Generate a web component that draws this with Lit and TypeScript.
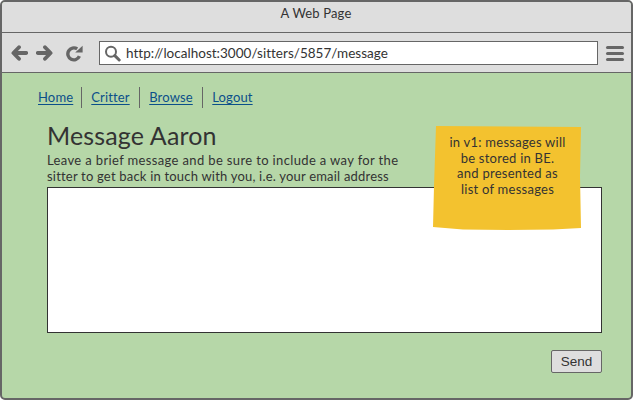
import { LitElement, html, css } from "lit";
import { customElement } from "lit/decorators.js";

@customElement("app-root")
export class AppRoot extends LitElement {
  static styles = css`
    :host { display: block; width: 633px; height: 400px; font-family: "Lato", "Open Sans", sans-serif; color: #333; }
    * { box-sizing: border-box; }
    .frame { position: relative; width: 633px; height: 400px; border: 2px solid #666; border-radius: 5px; background: #b6d7a8; display: flex; flex-direction: column; overflow: hidden; }
    .title { height: 31px; flex: none; background: #dedede; border-bottom: 1px solid #666; text-align: center; font-size: 13px; line-height: 23px; color: #333; padding-right: 1px; letter-spacing: 0.15px; }
    .toolbar { height: 40px; flex: none; background: #dedede; border-bottom: 1px solid #666; display: flex; align-items: center; padding: 1px 7px 0 9px; }
    .nav-icon { display: block; flex: none; }
    .back { margin-right: 8px; }
    .forward { margin-right: 13px; }
    .reload { margin-right: 16px; }
    .address { width: 499px; height: 24px; flex: none; background: #fff; border: 1.5px solid #666; display: flex; align-items: center; padding-left: 4px; gap: 5px; font-size: 13.5px; letter-spacing: 0.02px; color: #333; }
    .burger { margin-left: 8px; display: flex; flex-direction: column; gap: 3px; }
    .burger i { display: block; width: 18px; height: 3px; border-radius: 2px; background: #666; }
    .content { flex: 1; padding: 14px 29px 0 36px; display: flex; flex-direction: column; }
    .links { display: flex; height: 21px; align-items: stretch; font-size: 13px; letter-spacing: 0.15px; }
    .links a { color: #0b4f8a; text-decoration: underline; text-underline-offset: 2px; line-height: 20px; padding: 0 9.5px 0 9px; border-left: 1px solid #666; }
    .links a:first-child { padding-left: 0; padding-right: 8px; border-left: none; }
    .body { margin: 12px 0 0 9px; display: flex; flex-direction: column; }
    h1 { margin: 0; font-size: 25px; font-weight: 400; line-height: 30px; letter-spacing: 0.15px; color: #333; }
    p { margin: 0; font-size: 13px; line-height: 16px; padding-top: 2px; white-space: nowrap; }
    .line-a { display: block; letter-spacing: 0.36px; }
    .line-b { display: block; letter-spacing: 0.2px; }
    .box { margin-top: 3px; height: 146px; background: #fff; border: 1px solid #333; }
    .actions { display: flex; justify-content: flex-end; margin-top: 17px; }
    button { width: 51px; height: 23px; padding: 0; background: #dedede; border: 1px solid #666; border-radius: 2px; font-family: "Liberation Sans", Arial, sans-serif; font-size: 13.5px; color: #333; }
    .sticky { position: absolute; left: 431px; top: 124px; width: 149px; height: 105px; background: #f3c22f; clip-path: polygon(3px 0, 148px 1px, 147px 50px, 148px 102px, 120px 103.5px, 75px 104px, 30px 103.5px, 0 101px, 1px 60px); padding-top: 9px; text-align: center; font-size: 13px; line-height: 15.6px; letter-spacing: 0.25px; color: #333; }
  `;

  render() {
    return html`
      <div class="frame">
        <div class="title">A Web Page</div>
        <div class="toolbar">
          <svg class="nav-icon back" width="17" height="16" viewBox="0 0 17 16"><path d="M8 2.2 L2.4 8 L8 13.8 M3 8 H15.2" fill="none" stroke="#666" stroke-width="3.8" stroke-linecap="round" stroke-linejoin="round"/></svg>
          <svg class="nav-icon forward" width="17" height="16" viewBox="0 0 17 16"><path d="M9 2.2 L14.6 8 L9 13.8 M14 8 H1.8" fill="none" stroke="#666" stroke-width="3.8" stroke-linecap="round" stroke-linejoin="round"/></svg>
          <svg class="nav-icon reload" width="17" height="17" viewBox="0 0 17 17"><path d="M13.4 11.2 A6 6 0 1 1 11.2 3.9" fill="none" stroke="#666" stroke-width="3.4"/><path d="M9.2 7.6 H16.6 V0.8 Z" fill="#666"/></svg>
          <div class="address">
            <svg class="nav-icon" width="17" height="17" viewBox="0 0 17 17"><circle cx="7" cy="6.8" r="5" fill="none" stroke="#666" stroke-width="2"/><path d="M10.8 10.6 L15.2 15" stroke="#666" stroke-width="3" stroke-linecap="round"/></svg>
            <span>http://localhost:3000/sitters/5857/message</span>
          </div>
          <div class="burger"><i></i><i></i><i></i></div>
        </div>
        <div class="content">
          <nav class="links"><a>Home</a><a>Critter</a><a>Browse</a><a>Logout</a></nav>
          <div class="body">
            <h1>Message Aaron</h1>
            <p><span class="line-a">Leave a brief message and be sure to include a way for the</span> <span class="line-b">sitter to get back in touch with you, i.e. your email address</span></p>
            <div class="box"></div>
            <div class="actions"><button>Send</button></div>
          </div>
        </div>
        <div class="sticky">in v1: messages will<br />be stored in BE.<br />and presented as<br />list of messages</div>
      </div>
    `;
  }
}
